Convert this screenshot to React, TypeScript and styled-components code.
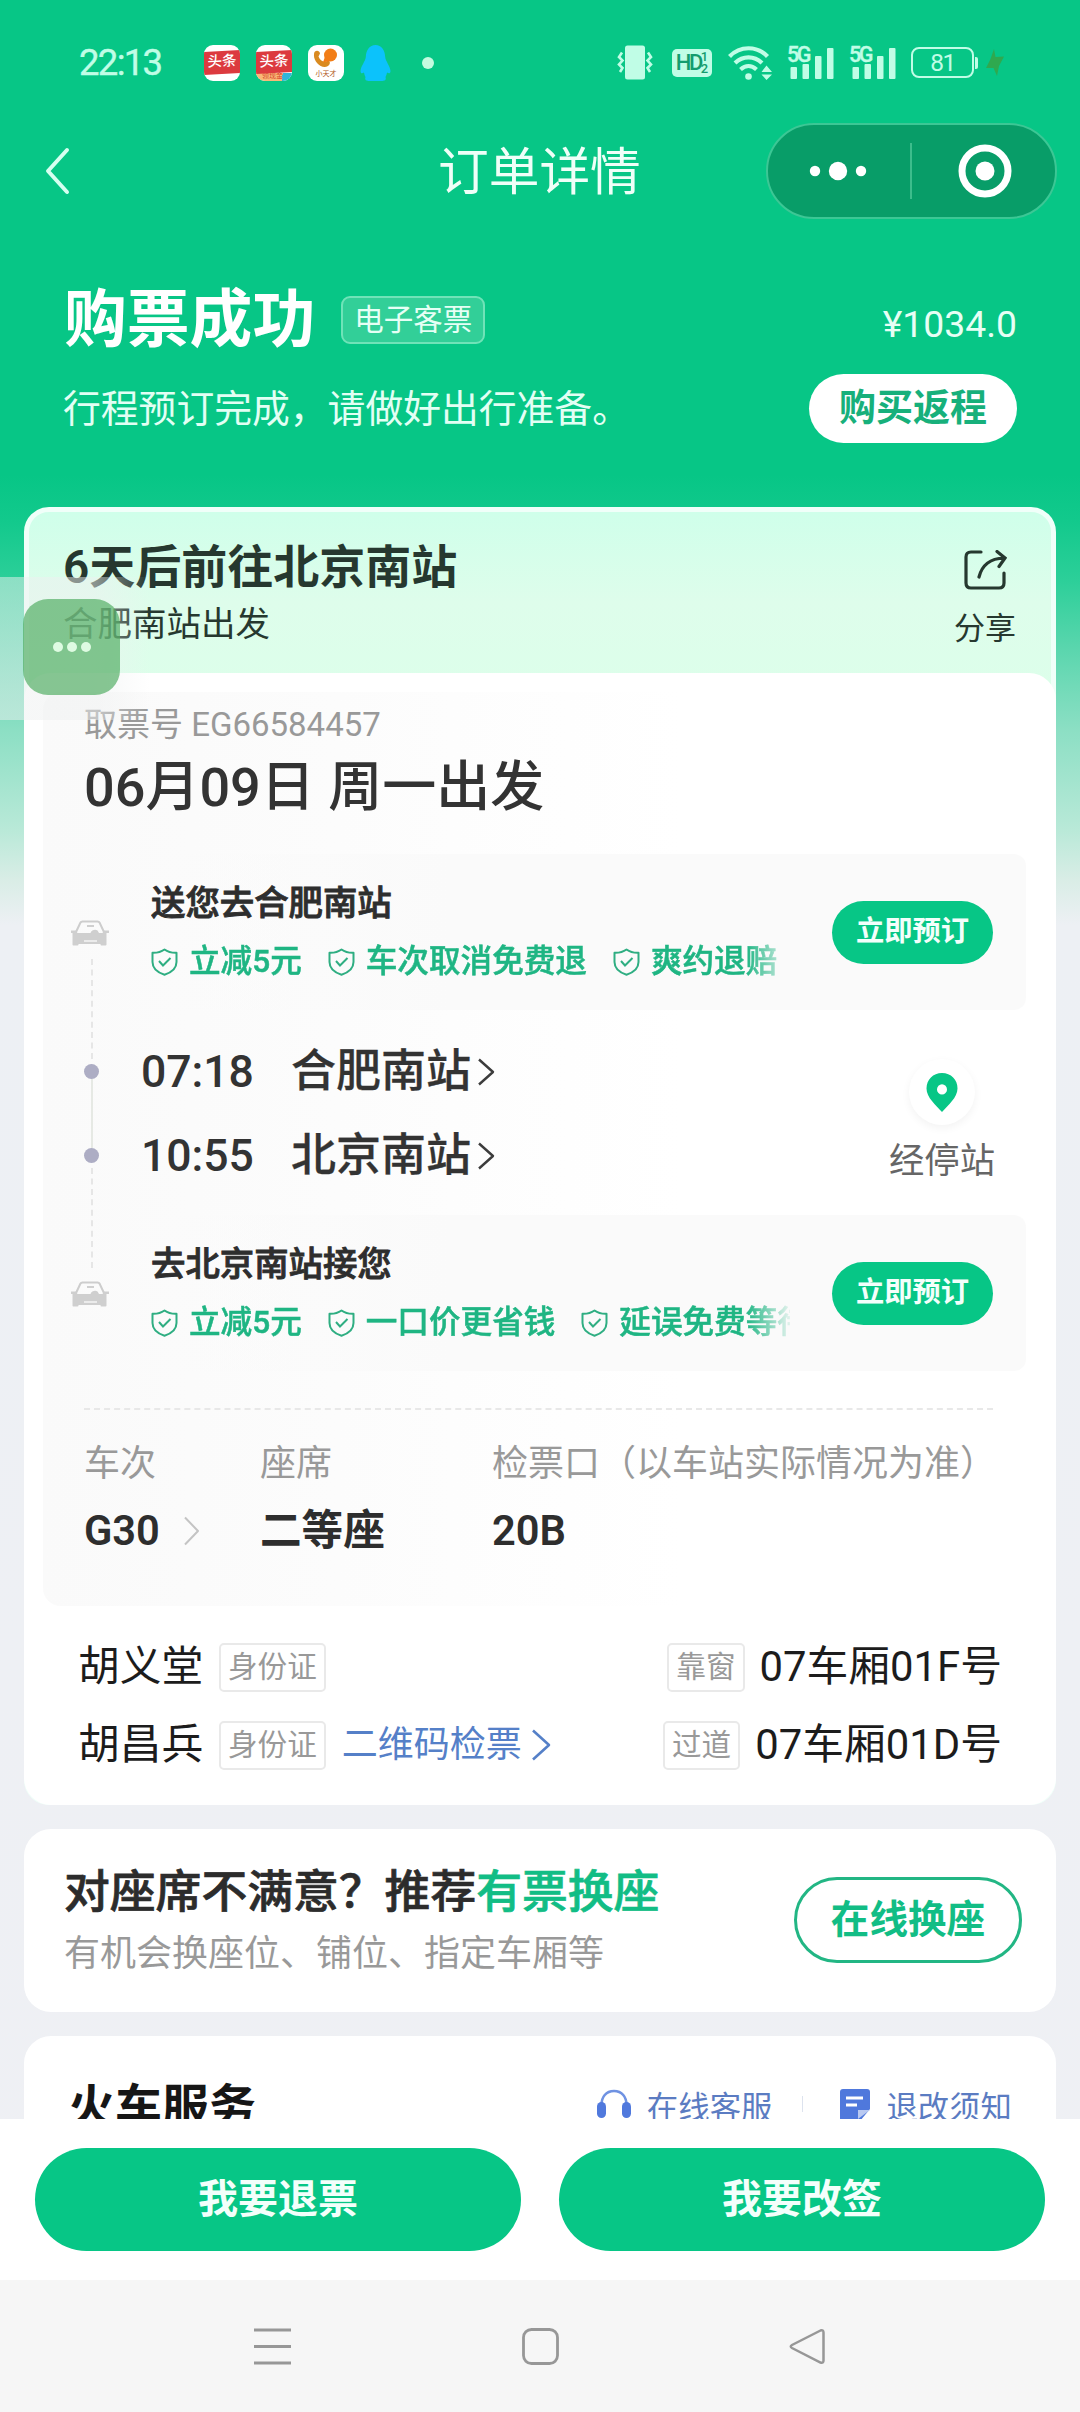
import React from "react";
import styled, { createGlobalStyle } from "styled-components";

const GREEN = "#07c686";
const MINT = "#c0fde6";

const GlobalStyle = createGlobalStyle`
  * { box-sizing: border-box; }
  html, body { margin: 0; padding: 0; }
  body {
    font-family: Roboto, "Noto Sans CJK SC", sans-serif;
    color: #303030;
    background: #eff0f4;
  }
  svg { display: block; flex: none; }
`;

const Screen = styled.div`
  width: 1080px;
  height: 2412px;
  overflow: hidden;
  display: flex;
  flex-direction: column;
  position: relative;
  background: linear-gradient(
    180deg,
    ${GREEN} 0px,
    ${GREEN} 475px,
    #12c98c 520px,
    #2ccf99 580px,
    #5bd6ae 650px,
    #8cdfc4 730px,
    #b9e9d8 830px,
    #d9ede6 880px,
    #edf0f4 925px,
    #eff0f4 100%
  );
`;

const Content = styled.main`
  height: 2119px;
  overflow: hidden;
  flex: none;
`;

/* ---------- status bar ---------- */

const StatusBar = styled.header`
  height: 123px;
  padding: 2px 76px 0 79px;
  display: flex;
  align-items: center;
  justify-content: space-between;
  color: ${MINT};
`;

const StatusGroup = styled.div<{ $gap: number }>`
  display: flex;
  align-items: center;
  gap: ${(p) => p.$gap}px;
`;

const Clock = styled.span`
  width: 109px;
  font-size: 36.5px;
  line-height: 40px;
  letter-spacing: -1.7px;
  -webkit-text-stroke: 0.4px currentColor;
`;

const AppTile = styled.span`
  width: 36px;
  height: 36px;
  border-radius: 9px;
  overflow: hidden;
  background: #fff;
  display: flex;
  flex-direction: column;
  justify-content: center;
  align-items: center;
`;

const NewsBand = styled.span<{ $lite?: boolean }>`
  width: 36px;
  height: ${(p) => (p.$lite ? 22 : 23)}px;
  margin-top: ${(p) => (p.$lite ? 6 : 0)}px;
  background: #dc3a3f;
  color: #fff;
  font-size: 14.5px;
  font-weight: 500;
  line-height: 22px;
  text-align: center;
  transform: skewY(-3deg);
`;

const LiteBand = styled.span`
  width: 36px;
  height: 8px;
  background: linear-gradient(100deg, #f9b877 72%, #2fb6d8 72%);
  color: #d8452c;
  font-size: 7px;
  line-height: 7px;
  padding-left: 6px;
`;

const KidLabel = styled.span`
  font-size: 7px;
  line-height: 8px;
  color: #b0571c;
`;

const MoreDot = styled.span`
  width: 12px;
  height: 12px;
  margin-left: 15px;
  border-radius: 50%;
  background: #c4fbe0;
`;

const HdBadge = styled.span`
  width: 40px;
  height: 28px;
  margin: 0 1px 0 4px;
  border-radius: 5px;
  background: ${MINT};
  color: #149c6e;
  display: flex;
  align-items: center;
  justify-content: center;
  gap: 1px;
  font-size: 22px;
  line-height: 28px;
  font-weight: 500;
`;

const HdText = styled.span`
  width: 24px;
  letter-spacing: -2.5px;
`;

const HdLines = styled.span`
  display: flex;
  flex-direction: column;
  font-size: 13px;
  line-height: 11.5px;
`;

const Battery = styled.span`
  width: 63px;
  height: 31px;
  border: 2px solid ${MINT};
  border-radius: 8px;
  font-size: 24.5px;
  line-height: 28px;
  letter-spacing: -1.5px;
  text-align: center;
`;

const BatteryTip = styled.span`
  width: 3px;
  height: 12px;
  margin-left: 1px;
  border-radius: 0 2px 2px 0;
  background: ${MINT};
`;

/* ---------- navigation bar ---------- */

const NavBar = styled.nav`
  height: 96px;
  padding: 0 24px 0 45px;
  display: grid;
  grid-template-columns: 290px 1fr 290px;
  align-items: center;
`;

const NavTitle = styled.h1`
  margin: 4px 0 0 103px;
  width: 204px;
  font-size: 50.7px;
  line-height: 60px;
  font-weight: 400;
  color: #effff8;
  white-space: nowrap;
`;

const Capsule = styled.div`
  width: 291px;
  height: 96px;
  border-radius: 48px;
  border: 2px solid #3cc795;
  background: #089d68;
  display: flex;
  align-items: center;
  padding-left: 41px;
`;

const CapsuleRule = styled.span`
  width: 2px;
  height: 56px;
  margin: 0 46px 0 43px;
  background: #3dbd8c;
`;

/* ---------- hero ---------- */

const Hero = styled.section`
  height: 288px;
  padding: 0 63px 0 64px;
  display: flex;
  justify-content: space-between;
`;

const HeroMain = styled.div`
  padding-top: 64px;
`;

const HeroHeading = styled.div`
  display: flex;
  align-items: center;
  gap: 26px;
  height: 74px;
`;

const HeroTitle = styled.h2`
  margin: 0;
  font-size: 62.8px;
  line-height: 74px;
  font-weight: 700;
  color: #fff;
`;

const ETicket = styled.span`
  width: 144px;
  height: 48px;
  border: 2px solid #6fe3b8;
  border-radius: 9px;
  background: #32cf98;
  color: #e6fff5;
  font-size: 29.5px;
  line-height: 45px;
  text-align: center;
`;

const HeroText = styled.p`
  margin: 30px 0 0 -1px;
  font-size: 37.8px;
  line-height: 44px;
  color: #e2fff4;
  white-space: nowrap;
`;

const HeroSide = styled.div`
  display: flex;
  flex-direction: column;
  align-items: flex-end;
  padding-top: 84px;
`;

const Price = styled.span`
  font-size: 37.3px;
  line-height: 42px;
  color: #e6fff5;
`;

const ReturnButton = styled.button`
  margin-top: 29px;
  width: 208px;
  height: 69px;
  padding: 0;
  border: 0;
  border-radius: 35px;
  background: #fff;
  color: #17b07b;
  font: 700 37px/60px Roboto, "Noto Sans CJK SC", sans-serif;
`;

/* ---------- order card ---------- */

const OrderCard = styled.section`
  margin: 0 24px;
  height: 1298px;
  border: 5px solid #f0fff9;
  border-radius: 25px;
  background: linear-gradient(180deg, #cfffea 0px, #defdeb 90px, #dcffea 200px);
`;

const OrderHead = styled.div`
  height: 161px;
  padding: 28px 35px 0 34px;
  display: flex;
  justify-content: space-between;
`;

const OrderTitle = styled.h3`
  margin: 0;
  font-size: 46px;
  line-height: 54px;
  font-weight: 600;
  color: #26382f;
`;

const OrderSub = styled.p`
  margin: 5px 0 0;
  font-size: 34.5px;
  line-height: 50px;
  color: #26382f;
`;

const Share = styled.div`
  display: flex;
  flex-direction: column;
  align-items: center;
  padding-top: 10px;
  gap: 20px;
  font-size: 31px;
  line-height: 38px;
  color: #26382f;
`;

const OrderBody = styled.div`
  margin: 0 -5px;
  height: 1132px;
  border-radius: 27px;
  background: #fff;
  padding-top: 19px;
`;

const Ticket = styled.div`
  margin: 0 30px 0 19px;
  height: 914px;
  border-radius: 18px;
  background: linear-gradient(90deg, #fafafa 0%, #fcfcfc 30%, #fff 65%);
`;

const TicketHead = styled.div`
  height: 162px;
  padding: 12px 0 0 41px;
`;

const PickupNo = styled.p`
  margin: 0;
  font-size: 33px;
  line-height: 42px;
  color: #999;
`;

const DepartDate = styled.p`
  margin: 7px 0 0;
  font-size: 54px;
  line-height: 70px;
  font-weight: 500;
  color: #333;
  white-space: nowrap;
`;

const Itinerary = styled.div`
  display: grid;
  grid-template-columns: 97px 1fr;
  height: 517px;
`;

const Timeline = styled.div`
  display: flex;
  flex-direction: column;
  align-items: center;
  padding-top: 66px;
`;

const DashedLine = styled.span`
  width: 0;
  height: 100px;
  margin: 13px 0 5px;
  border-left: 2px dashed #e6e6e6;
`;

const DashedLineTail = styled(DashedLine)`
  margin: 5px 0 13px;
`;

const SolidLine = styled.span`
  width: 2px;
  height: 69px;
  background: #e6e9e4;
`;

const StopDot = styled.span`
  width: 15px;
  height: 15px;
  border-radius: 50%;
  background: #adadc4;
`;

const CarSvg = styled.svg`
  margin-left: -3px;
`;

const Legs = styled.div`
  display: flex;
  flex-direction: column;
  min-width: 0;
`;

const Transfer = styled.div`
  height: 156px;
  border-radius: 0 12px 12px 0;
  background: linear-gradient(90deg, rgba(249, 249, 249, 0) 0%, #fafafa 35%);
  display: flex;
  justify-content: space-between;
  padding: 27px 33px 0 11px;
`;

const TransferInfo = styled.div`
  width: 639px;
  overflow: hidden;
`;

const TransferTitle = styled.h4`
  margin: 0;
  font-size: 34.4px;
  line-height: 44px;
  font-weight: 500;
  -webkit-text-stroke: 0.9px currentColor;
  color: #2e2e2e;
`;

const Perks = styled.div`
  margin-top: 15px;
  display: flex;
  gap: 26px;
  mask-image: linear-gradient(90deg, #000 595px, rgba(0, 0, 0, 0.1) 639px);
`;

const Perk = styled.span`
  flex: none;
  display: flex;
  align-items: center;
  gap: 11px;
  font-size: 31.6px;
  line-height: 44px;
  font-weight: 500;
  -webkit-text-stroke: 0.5px currentColor;
  color: #1fb583;
`;

const BookButton = styled.button`
  width: 161px;
  height: 63px;
  margin-top: 20px;
  padding: 0 0 2px;
  border: 0;
  border-radius: 32px;
  background: ${GREEN};
  color: #f3fffb;
  font: 700 28.3px/56px Roboto, "Noto Sans CJK SC", sans-serif;
`;

const Trip = styled.div`
  height: 205px;
  padding: 20px 25px 0 1px;
  display: flex;
  justify-content: space-between;
`;

const Stops = styled.div`
  display: flex;
  flex-direction: column;
`;

const Stop = styled.div`
  height: 84px;
  display: flex;
  align-items: center;
  font-size: 45px;
  line-height: 78px;
  color: #333;
`;

const StopTime = styled.span`
  width: 150px;
  font-size: 44.5px;
  font-weight: 500;
`;

const StopName = styled.span`
  width: 186px;
  font-weight: 500;
  -webkit-text-stroke: 0.3px currentColor;
`;

const Via = styled.div`
  width: 118px;
  display: flex;
  flex-direction: column;
  align-items: center;
  padding-top: 29px;
  font-size: 35.3px;
  line-height: 44px;
  color: #666;
`;

const PinBubble = styled.span`
  width: 66px;
  height: 66px;
  margin-bottom: 14px;
  border-radius: 50%;
  background: #fff;
  box-shadow: 0 3px 8px rgba(0, 0, 0, 0.05);
  display: flex;
  align-items: center;
  justify-content: center;
`;

const Facts = styled.div`
  margin: 37px 0 0 41px;
  width: 909px;
  border-top: 2px dashed #e8e8e8;
  padding-top: 31px;
  display: grid;
  grid-template-columns: 176px 232px 1fr;
`;

const Fact = styled.div`
  white-space: nowrap;
`;

const FactLabel = styled.div`
  font-size: 36px;
  line-height: 46px;
  color: #999;
`;

const FactValue = styled.div`
  margin-top: 20px;
  display: flex;
  align-items: center;
  gap: 23px;
  font-size: 41.6px;
  line-height: 48px;
  font-weight: 600;
  color: #2e2e2e;
`;

const Passengers = styled.div`
  padding: 22px 54px 0 54px;
`;

const Passenger = styled.div`
  height: 78px;
  display: flex;
  align-items: center;
  font-size: 41.8px;
  line-height: 60px;
  color: #1c1c1c;
`;

const PassengerName = styled.span`
  width: 141px;
  white-space: nowrap;
`;

const Tag = styled.span`
  height: 49px;
  padding: 0 7px;
  border: 2px solid #e9e9e9;
  border-radius: 5px;
  font-size: 29.6px;
  line-height: 44px;
  color: #999;
`;

const CodeLink = styled.a`
  margin-left: 16px;
  display: flex;
  align-items: center;
  gap: 9px;
  font-size: 36px;
  color: #5580c8;
`;

const Seat = styled.span`
  margin-left: auto;
  display: flex;
  align-items: center;
  gap: 15px;
`;

/* ---------- secondary cards ---------- */

const SwapCard = styled.section`
  margin: 24px 24px 0;
  height: 183px;
  border-radius: 27px;
  background: #fff;
  padding: 34px 34px 0 40px;
  display: flex;
  justify-content: space-between;
`;

const SwapTitle = styled.h3`
  margin: 0;
  font-size: 45.8px;
  line-height: 60px;
  font-weight: 500;
  -webkit-text-stroke: 0.7px currentColor;
  color: #2c2c2c;
`;

const Highlight = styled.span`
  color: #12bd85;
`;

const SwapSub = styled.p`
  margin: 8px 0 0;
  font-size: 36px;
  line-height: 46px;
  color: #999;
`;

const SwapButton = styled.button`
  margin-top: 14px;
  width: 228px;
  height: 86px;
  padding: 0;
  border: 3px solid #22b684;
  border-radius: 43px;
  background: #fff;
  color: #12bd85;
  font: 700 38.6px/76px Roboto, "Noto Sans CJK SC", sans-serif;
`;

const ServiceCard = styled.section`
  margin: 24px 24px 0;
  height: 200px;
  border-radius: 27px;
  background: #fff;
  padding: 41px 44px 0 44px;
  display: flex;
  align-items: flex-start;
`;

const ServiceTitle = styled.h3`
  margin: 0 auto 0 0;
  font-size: 47px;
  line-height: 60px;
  font-weight: 700;
  color: #161616;
`;

const ServiceLink = styled.a`
  display: flex;
  align-items: center;
  gap: 16px;
  height: 56px;
  font-size: 31.4px;
  color: #5b7cc2;
`;

const ServiceRule = styled.span`
  width: 1px;
  height: 16px;
  margin: 19px 37px 0 30px;
  background: #dde3ee;
`;

/* ---------- bottom ---------- */

const ActionBar = styled.div`
  height: 161px;
  flex: none;
  background: #fff;
  padding: 29px 35px 0;
  display: grid;
  grid-template-columns: 1fr 1fr;
  column-gap: 38px;
`;

const ActionButton = styled.button`
  height: 103px;
  padding: 1px 0 0;
  border: 0;
  border-radius: 52px;
  background: ${GREEN};
  color: #f3fffb;
  font: 700 40px/90px Roboto, "Noto Sans CJK SC", sans-serif;
`;

const SystemNav = styled.div`
  height: 132px;
  flex: none;
  background: #f6f6f6;
  padding: 48px 255px 0 254px;
  display: flex;
  justify-content: space-between;
`;

/* ---------- floating assistant ---------- */

const FloatHalo = styled.div`
  position: absolute;
  left: 0;
  top: 577px;
  width: 150px;
  height: 143px;
  padding: 22px 0 0 23px;
  background: linear-gradient(90deg, rgba(238, 240, 240, 0.5) 95px, rgba(243, 243, 243, 0) 100%);
`;

const FloatButton = styled.div`
  width: 97px;
  height: 96px;
  border-radius: 25px;
  background: rgba(80, 172, 98, 0.68);
  display: flex;
  align-items: center;
  justify-content: center;
  gap: 4px;
`;

const FloatDot = styled.span`
  width: 10px;
  height: 10px;
  border-radius: 50%;
  background: #defbe2;
`;

/* ---------- drawings ---------- */

const Chevron = ({ w, h, color, stroke }: { w: number; h: number; color: string; stroke: number }) => (
  <svg width={w} height={h} viewBox={`0 0 ${w} ${h}`} fill="none">
    <path d={`M2 1.5 L${w - 2} ${h / 2} L2 ${h - 1.5}`} stroke={color} strokeWidth={stroke} strokeLinejoin="round" />
  </svg>
);

const KidIcon = () => (
  <svg width="26" height="22" viewBox="0 0 26 22">
    <circle cx="17.500" cy="7" r="6.500" fill="#f27d17" />
    <path d="M1.500 4c2-2.200 5-1.500 5.500 1.500L5.500 8.500c1 3 3.500 5 6.500 5.500l3-1.500c2.500.5 2.500 3.500 0 5.500C8 22-1.500 12 1.500 4z" fill="#d98a20" />
    <path d="M10 14.500l2-6 5 4.500z" fill="#f27d17" />
  </svg>
);

const PenguinIcon = () => (
  <svg width="31" height="36" viewBox="0 0 31 36">
    <path
      d="M15.500 0C21.500 0 25 5 25.200 12c.2 4 5 9 5.300 14 0 3-2 2.500-3.500 1.500-.3 2-.8 3-1.500 4.500 1 3-.5 4-4.500 4h-11c-4 0-5.500-1-4.500-4-.7-1.500-1.200-2.500-1.500-4.500-1.500 1-3.500 1.500-3.500-1.500C.8 21 5.600 16 5.800 12 6 5 9.500 0 15.500 0z"
      fill="#0cc2fb"
    />
  </svg>
);

const VibrateIcon = () => (
  <svg width="36" height="35" viewBox="0 0 36 35" fill="none" stroke={MINT} strokeWidth="2.600">
    <rect x="8" y="0.500" width="20" height="34" rx="2.500" fill={MINT} stroke="none" />
    <path d="M5 7.500L2 12l3.500 3.500L2 19.500l3.500 3.500L3 27M31 7.500l3 4.500-3.500 3.500 3.500 4-3.500 3.500L33 27" />
  </svg>
);

const WifiIcon = () => (
  <svg width="44" height="34" viewBox="0 0 44 34" fill="none" stroke={MINT} strokeWidth="4.200">
    <path d="M1.500 10.500C12-.5 29-.5 39.500 10.500M7 17c8-7.500 19-7.500 27 0M12.500 23.500c5-4.500 11-4.500 16 0" />
    <circle cx="20.500" cy="30.500" r="3.300" fill={MINT} stroke="none" />
    <path d="M38.500 19.500l5.500 6.500H33.500zM38.500 34l5.500-5.500H33.500z" fill={MINT} stroke="none" />
  </svg>
);

const SignalWrap = styled.span`
  display: grid;
  width: 47px;
  height: 33px;
`;

const SignalLabel = styled.span`
  grid-area: 1 / 1;
  font-size: 21.5px;
  line-height: 17px;
  font-weight: 500;
  letter-spacing: -2.5px;
  -webkit-text-stroke: 0.4px currentColor;
`;

const SignalBars = styled.svg`
  grid-area: 1 / 1;
`;

const Signal = () => (
  <SignalWrap>
    <SignalLabel>5G</SignalLabel>
    <SignalBars width="47" height="33" viewBox="0 0 47 33" fill={MINT}>
      <rect x="3.500" y="21" width="6.500" height="12" rx="1" />
      <rect x="15.500" y="18" width="6.500" height="15" rx="1" />
      <rect x="28" y="10" width="6.500" height="23" rx="1" />
      <rect x="40" y="2" width="6.500" height="31" rx="1" />
    </SignalBars>
  </SignalWrap>
);

const BoltSvg = styled.svg`
  margin-left: 8px;
`;

const BoltIcon = () => (
  <BoltSvg width="18" height="28" viewBox="0 0 18 28">
    <path d="M8 0l1.500 8 8.500-.5L13 17l-2 10-3.500-8H0l4.500-9z" fill="#2fa94f" />
  </BoltSvg>
);

const ShareIcon = () => (
  <svg width="43" height="40" viewBox="0 0 43 40" fill="none" stroke="#26382f" strokeWidth="3.200" strokeLinecap="round">
    <path d="M17 2H7Q2 2 2 7v26q0 5 5 5h28q5 0 5-5V23" />
    <path d="M15 27C18 15 26 8.500 40 8M33 1.500L41 8l-6 8.500" />
  </svg>
);

const ShieldIcon = () => (
  <svg width="27" height="28" viewBox="0 0 27 28" fill="none" stroke="#2fae82" strokeWidth="2">
    <path d="M13.500 1.500C10 4 6 5 1.500 4.800V14c0 6.500 5 10.500 12 12.700C20.500 24.500 25.500 20.500 25.500 14V4.800C21 5 17 4 13.500 1.500z" strokeLinejoin="round" />
    <path d="M8 13l4 4.500 7.500-7.500" />
  </svg>
);

const CarIcon = () => (
  <CarSvg width="40" height="26" viewBox="0 0 40 26">
    <path d="M6 12L10.500 2.500Q11 1.500 12.500 1.500h15q1.500 0 2 1L34 12" fill="none" stroke="#cdcdcd" strokeWidth="2" />
    <path d="M1 10.500h5l1.500 2.500h13c1-3 5-4 7-2.500l1.500 2.500h3.500l1.500-2.500h5v2.500h-2.500v11.500q0 1-1 1h-4q-1 0-1-1V24H8.500v.5q0 1-1 1h-4q-1 0-1-1V13H1z" fill="#cfcfcf" />
    <path d="M17 6h7" stroke="#cfcfcf" strokeWidth="2" />
    <path d="M14 21h13" stroke="#f4f4f4" strokeWidth="1.500" />
  </CarSvg>
);

const PinIcon = () => (
  <svg width="32" height="39" viewBox="0 0 32 38" preserveAspectRatio="none">
    <path d="M16 0C7 0 .5 6.500.5 15c0 9 9.500 16 15.500 23 6-7 15.500-14 15.500-23C31.500 6.500 25 0 16 0z" fill={GREEN} />
    <circle cx="16" cy="16" r="5" fill="#fff" />
  </svg>
);

const HeadsetIcon = () => (
  <svg width="34" height="32" viewBox="0 0 34 32" fill="#5079dd">
    <path d="M4.500 18V16C4.500 8 9 2 17 2s12.500 6 12.500 14v2" fill="none" stroke="#6f92e2" strokeWidth="2.600" />
    <rect x="0" y="13" width="9" height="16" rx="4.500" />
    <rect x="25" y="13" width="9" height="16" rx="4.500" />
  </svg>
);

const NoteIcon = () => (
  <svg width="30" height="32" viewBox="0 0 30 32">
    <path d="M3 0h24q3 0 3 3v17l-10 12H3q-3 0-3-3V3q0-3 3-3z" fill="#4f78dc" />
    <path d="M6 9h17M6 16h11" stroke="#fff" strokeWidth="3" />
    <path d="M18 30v-9h12z" fill="#b9c9f1" />
  </svg>
);

/* ---------- data ---------- */

const transfers = {
  out: { title: "送您去合肥南站", perks: ["立减5元", "车次取消免费退", "爽约退赔"] },
  back: { title: "去北京南站接您", perks: ["立减5元", "一口价更省钱", "延误免费等待"] },
};

const stops = [
  { time: "07:18", name: "合肥南站" },
  { time: "10:55", name: "北京南站" },
];

const passengers = [
  { name: "胡义堂", spot: "靠窗", seat: "07车厢01F号", code: false },
  { name: "胡昌兵", spot: "过道", seat: "07车厢01D号", code: true },
];

const TransferRow = ({ title, perks }: { title: string; perks: string[] }) => (
  <Transfer>
    <TransferInfo>
      <TransferTitle>{title}</TransferTitle>
      <Perks>
        {perks.map((perk) => (
          <Perk key={perk}>
            <ShieldIcon />
            {perk}
          </Perk>
        ))}
      </Perks>
    </TransferInfo>
    <BookButton>立即预订</BookButton>
  </Transfer>
);

export default function App() {
  return (
    <>
      <GlobalStyle />
      <Screen>
        <Content>
          <StatusBar>
            <StatusGroup $gap={16}>
              <Clock>22:13</Clock>
              <AppTile>
                <NewsBand>头条</NewsBand>
              </AppTile>
              <AppTile>
                <NewsBand $lite>头条</NewsBand>
                <LiteBand>领现金</LiteBand>
              </AppTile>
              <AppTile>
                <KidIcon />
                <KidLabel>小天才</KidLabel>
              </AppTile>
              <PenguinIcon />
              <MoreDot />
            </StatusGroup>
            <StatusGroup $gap={15}>
              <VibrateIcon />
              <HdBadge>
                <HdText>HD</HdText>
                <HdLines>
                  <span>1</span>
                  <span>2</span>
                </HdLines>
              </HdBadge>
              <WifiIcon />
              <Signal />
              <Signal />
              <StatusGroup $gap={0}>
                <Battery>81</Battery>
                <BatteryTip />
                <BoltIcon />
              </StatusGroup>
            </StatusGroup>
          </StatusBar>

          <NavBar>
            <svg width="25" height="48" viewBox="0 0 25 48" fill="none">
              <path d="M22 3L3 24l19 21" stroke="#d6fff1" strokeWidth="4" strokeLinecap="round" strokeLinejoin="round" />
            </svg>
            <NavTitle>订单详情</NavTitle>
            <Capsule>
              <svg width="58" height="20" viewBox="0 0 58 20" fill="#fff">
                <circle cx="6" cy="10" r="5.200" />
                <circle cx="29" cy="10" r="9.200" />
                <circle cx="52" cy="10" r="5.200" />
              </svg>
              <CapsuleRule />
              <svg width="54" height="54" viewBox="0 0 54 54" fill="none">
                <circle cx="27" cy="27" r="23" stroke="#fff" strokeWidth="7" />
                <circle cx="27" cy="27" r="9.500" fill="#fff" />
              </svg>
            </Capsule>
          </NavBar>

          <Hero>
            <HeroMain>
              <HeroHeading>
                <HeroTitle>购票成功</HeroTitle>
                <ETicket>电子客票</ETicket>
              </HeroHeading>
              <HeroText>行程预订完成，请做好出行准备。</HeroText>
            </HeroMain>
            <HeroSide>
              <Price>¥1034.0</Price>
              <ReturnButton>购买返程</ReturnButton>
            </HeroSide>
          </Hero>

          <OrderCard>
            <OrderHead>
              <div>
                <OrderTitle>6天后前往北京南站</OrderTitle>
                <OrderSub>合肥南站出发</OrderSub>
              </div>
              <Share>
                <ShareIcon />
                分享
              </Share>
            </OrderHead>
            <OrderBody>
              <Ticket>
                <TicketHead>
                  <PickupNo>取票号 EG66584457</PickupNo>
                  <DepartDate>06月09日 周一出发</DepartDate>
                </TicketHead>
                <Itinerary>
                  <Timeline>
                    <CarIcon />
                    <DashedLine />
                    <StopDot />
                    <SolidLine />
                    <StopDot />
                    <DashedLineTail />
                    <CarIcon />
                  </Timeline>
                  <Legs>
                    <TransferRow {...transfers.out} />
                    <Trip>
                      <Stops>
                        {stops.map((stop) => (
                          <Stop key={stop.time}>
                            <StopTime>{stop.time}</StopTime>
                            <StopName>{stop.name}</StopName>
                            <Chevron w={18} h={28} color="#3c3c3c" stroke={2.4} />
                          </Stop>
                        ))}
                      </Stops>
                      <Via>
                        <PinBubble>
                          <PinIcon />
                        </PinBubble>
                        经停站
                      </Via>
                    </Trip>
                    <TransferRow {...transfers.back} />
                  </Legs>
                </Itinerary>
                <Facts>
                  <Fact>
                    <FactLabel>车次</FactLabel>
                    <FactValue>
                      G30
                      <Chevron w={17} h={30} color="#c4c4c4" stroke={2} />
                    </FactValue>
                  </Fact>
                  <Fact>
                    <FactLabel>座席</FactLabel>
                    <FactValue>二等座</FactValue>
                  </Fact>
                  <Fact>
                    <FactLabel>检票口（以车站实际情况为准）</FactLabel>
                    <FactValue>20B</FactValue>
                  </Fact>
                </Facts>
              </Ticket>
              <Passengers>
                {passengers.map((p) => (
                  <Passenger key={p.name}>
                    <PassengerName>{p.name}</PassengerName>
                    <Tag>身份证</Tag>
                    {p.code && (
                      <CodeLink>
                        二维码检票
                        <Chevron w={20} h={32} color="#5580c8" stroke={2.6} />
                      </CodeLink>
                    )}
                    <Seat>
                      <Tag>{p.spot}</Tag>
                      {p.seat}
                    </Seat>
                  </Passenger>
                ))}
              </Passengers>
            </OrderBody>
          </OrderCard>

          <SwapCard>
            <div>
              <SwapTitle>
                对座席不满意？推荐<Highlight>有票换座</Highlight>
              </SwapTitle>
              <SwapSub>有机会换座位、铺位、指定车厢等</SwapSub>
            </div>
            <SwapButton>在线换座</SwapButton>
          </SwapCard>

          <ServiceCard>
            <ServiceTitle>火车服务</ServiceTitle>
            <ServiceLink>
              <HeadsetIcon />
              在线客服
            </ServiceLink>
            <ServiceRule />
            <ServiceLink>
              <NoteIcon />
              退改须知
            </ServiceLink>
          </ServiceCard>
        </Content>

        <ActionBar>
          <ActionButton>我要退票</ActionButton>
          <ActionButton>我要改签</ActionButton>
        </ActionBar>

        <SystemNav>
          <svg width="37" height="37" viewBox="0 0 37 37">
            <path d="M0 2h37M0 18.500h37M0 35h37" stroke="#979797" strokeWidth="3" />
          </svg>
          <svg width="37" height="37" viewBox="0 0 37 37" fill="none">
            <rect x="1.500" y="1.500" width="34" height="34" rx="8" stroke="#979797" strokeWidth="2.800" />
          </svg>
          <svg width="36" height="37" viewBox="0 0 36 37" fill="none">
            <path d="M31.500 2.500L3 17q-2.500 1.500 0 3l28.500 14.500q3 1 3-2v-28q0-3-3-2z" stroke="#979797" strokeWidth="2.500" />
          </svg>
        </SystemNav>

        <FloatHalo>
          <FloatButton>
            <FloatDot />
            <FloatDot />
            <FloatDot />
          </FloatButton>
        </FloatHalo>
      </Screen>
    </>
  );
}
